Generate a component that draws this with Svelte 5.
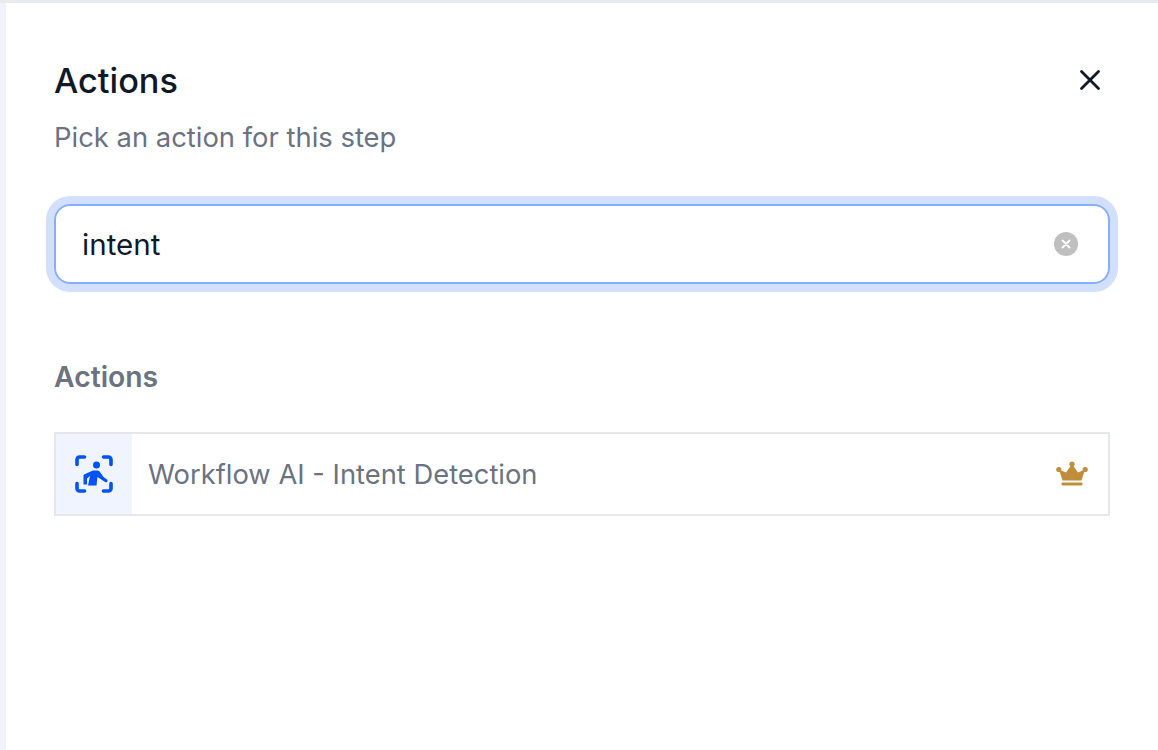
<script>
	let query = $state('intent');
</script>

<div class="page">
	<aside class="rail"></aside>
	<section class="panel">
		<header class="head">
			<div>
				<h2 class="title">Actions</h2>
				<p class="subtitle">Pick an action for this step</p>
			</div>
			<button type="button" class="close" aria-label="Close">
				<svg width="24" height="24" viewBox="0 0 24 24" fill="none" stroke="#111827" stroke-width="2.800" stroke-linecap="round">
					<path d="M3.500 3.500l17 17M20.500 3.500l-17 17" />
				</svg>
			</button>
		</header>

		<div class="search">
			<input type="text" bind:value={query} />
			<button type="button" class="clear" aria-label="Clear" onclick={() => (query = '')}>
				<svg width="24" height="24" viewBox="0 0 24 24" fill="none">
					<circle cx="12" cy="12" r="12" fill="#bfbfbf" />
					<path d="M8.500 8.500l7 7M15.500 8.500l-7 7" stroke="#fff" stroke-width="2" stroke-linecap="round" />
				</svg>
			</button>
		</div>

		<h3 class="section">Actions</h3>

		<div class="row">
			<span class="row-icon">
				<svg width="38" height="38" viewBox="0 0 38 38" fill="none">
					<path d="M2 9.500V4.500a2.500 2.500 0 0 1 2.500-2.500H9.500M28.500 2h5A2.500 2.500 0 0 1 36 4.500V9.500M36 28.500v5a2.500 2.500 0 0 1-2.500 2.500H28.500M9.500 36H4.500A2.500 2.500 0 0 1 2 33.500V28.500" stroke="#0052f5" stroke-width="3.600" stroke-linecap="round" />
					<circle cx="21.500" cy="10" r="3.500" fill="#0052f5" />
					<path d="M9 19.500L18 15.500h4c1.200 0 2.200.5 3 1.500l3.500 5 3.500 2.500c.7.600.7 1.500.2 2.200-.5.600-1.300.7-2 .3L25.500 24l-3-2-1 8.500H13l2-9.500-3 2.500v6H8.500v-9.200c0-.2.200-.3.500-.3z" fill="#0052f5" />
				</svg>
			</span>
			<span class="row-label">Workflow AI - Intent Detection</span>
			<svg class="crown" width="32" height="26" viewBox="0 0 32 26" fill="#c08e3a">
				<circle cx="16" cy="3" r="2.600" />
				<circle cx="2.800" cy="8.500" r="2.600" />
				<circle cx="29.200" cy="8.500" r="2.600" />
				<path d="M16 3l6 8.500 7-3-3.500 11h-19L3 8.500l7 3z" />
				<rect x="5.500" y="21.500" width="21" height="3" rx="1" />
			</svg>
		</div>
	</section>
</div>

<style>
	:global(body) {
		margin: 0;
		background: #fff;
	}

	.page {
		display: flex;
		height: 750px;
		overflow: hidden;
		font-family: Inter, "Liberation Sans", sans-serif;
		border-top: 3px solid #e9eaf0;
		box-sizing: border-box;
	}

	.rail {
		width: 6px;
		flex: none;
		background: #f1f2f9;
	}

	.panel {
		flex: 1;
		padding: 58px 48px 0 48px;
		min-width: 0;
	}

	.head {
		display: flex;
		justify-content: space-between;
		align-items: flex-start;
	}

	.title {
		margin: 0;
		font-size: 34.300px;
		line-height: 40px;
		font-weight: 500;
		color: #111827;
	}

	.subtitle {
		margin: 20px 0 0;
		font-size: 27.400px;
		line-height: 32px;
		color: #6b7280;
	}

	.close {
		display: flex;
		padding: 0;
		margin: 7px 8px 0 0;
		border: none;
		background: none;
		cursor: pointer;
	}

	.search {
		display: flex;
		align-items: center;
		height: 80px;
		margin-top: 51px;
		padding: 0 30px 0 26px;
		box-sizing: border-box;
		border: 2px solid #86aefb;
		border-radius: 16px;
		box-shadow: 0 0 0 8px #d2e0fd;
	}

	.search input {
		flex: 1;
		min-width: 0;
		border: none;
		outline: none;
		padding: 0;
		font: inherit;
		font-size: 29.600px;
		color: #111827;
		background: transparent;
	}

	.clear {
		display: flex;
		padding: 0;
		border: none;
		background: none;
		cursor: pointer;
	}

	.section {
		margin: 75px 0 0;
		font-size: 28.300px;
		line-height: 36px;
		font-weight: 600;
		color: #6b7280;
	}

	.row {
		display: flex;
		align-items: center;
		height: 84px;
		margin-top: 37px;
		box-sizing: border-box;
		border: 2px solid #e5e7eb;
	}

	.row-icon {
		display: flex;
		align-items: center;
		justify-content: center;
		width: 76px;
		height: 100%;
		flex: none;
		background: #f0f4ff;
	}

	.row-label {
		flex: 1;
		margin-left: 16px;
		font-size: 27.350px;
		color: #6b7280;
	}

	.crown {
		margin-right: 20px;
	}
</style>
